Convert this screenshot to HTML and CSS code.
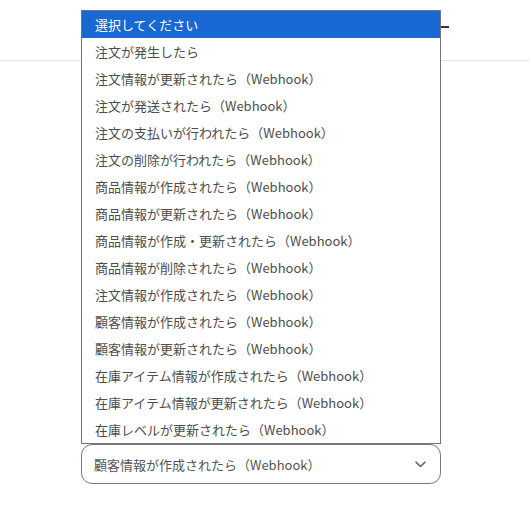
FILE: index.html
```html
<!DOCTYPE html>
<html lang="ja">
<head>
    <meta charset="UTF-8">
    <meta name="viewport" content="width=device-width, initial-scale=1.0">
    <title>トリガー設定</title>
    <link rel="stylesheet" href="styles.css">
</head>
<body>
    <div class="topbar">
        <span class="topbar-mark"></span>
    </div>
    <div class="form">
        <div class="select-wrap">
            <ul class="options">
                <li class="option selected">選択してください</li>
                <li class="option">注文が発生したら</li>
                <li class="option">注文情報が更新されたら（Webhook）</li>
                <li class="option">注文が発送されたら（Webhook）</li>
                <li class="option">注文の支払いが行われたら（Webhook）</li>
                <li class="option">注文の削除が行われたら（Webhook）</li>
                <li class="option">商品情報が作成されたら（Webhook）</li>
                <li class="option">商品情報が更新されたら（Webhook）</li>
                <li class="option">商品情報が作成・更新されたら（Webhook）</li>
                <li class="option">商品情報が削除されたら（Webhook）</li>
                <li class="option">注文情報が作成されたら（Webhook）</li>
                <li class="option">顧客情報が作成されたら（Webhook）</li>
                <li class="option">顧客情報が更新されたら（Webhook）</li>
                <li class="option">在庫アイテム情報が作成されたら（Webhook）</li>
                <li class="option">在庫アイテム情報が更新されたら（Webhook）</li>
                <li class="option">在庫レベルが更新されたら（Webhook）</li>
            </ul>
            <div class="select">
                <span class="select-value">顧客情報が作成されたら（Webhook）</span>
                <svg class="chevron" width="11" height="7" viewBox="0 0 11 7">
                    <path d="M1 1.2 L5.5 5.5 L10 1.2" fill="none" stroke="#6b6b6b" stroke-width="1.6" stroke-linecap="round" stroke-linejoin="round"/>
                </svg>
            </div>
        </div>
    </div>
</body>
</html>
```

FILE: styles.css
```css
body {
    margin: 0;
    padding: 0;
    background-color: #ffffff;
    font-family: "Noto Sans CJK JP", "Noto Sans", sans-serif;
    color: #4a4a4a;
}
.topbar {
    height: 60px;
    border-bottom: 1px solid #e3e3e3;
    position: relative;
}
.topbar-mark {
    position: absolute;
    left: 441px;
    top: 26px;
    width: 8px;
    height: 2px;
    background-color: #333333;
}
.form {
    padding-top: 383px;
    padding-left: 81px;
}
.select-wrap {
    position: relative;
    width: 360px;
}
.select {
    box-sizing: border-box;
    height: 40px;
    border: 1px solid #7a7a7a;
    border-radius: 11px;
    display: flex;
    align-items: center;
    justify-content: space-between;
    padding: 0 14px 0 12px;
    font-size: 13px;
    color: #555555;
}
.chevron {
    display: block;
}
.options {
    list-style: none;
    margin: 0;
    padding: 0;
    position: absolute;
    left: 0;
    bottom: 100%;
    width: 100%;
    box-sizing: border-box;
    border: 1px solid #767676;
    background-color: #ffffff;
}
.option {
    height: 27px;
    line-height: 27px;
    padding-left: 13px;
    font-size: 13px;
    color: #4d4d4d;
    white-space: nowrap;
}
.option.selected {
    background-color: #1967d2;
    color: #ffffff;
}
```
